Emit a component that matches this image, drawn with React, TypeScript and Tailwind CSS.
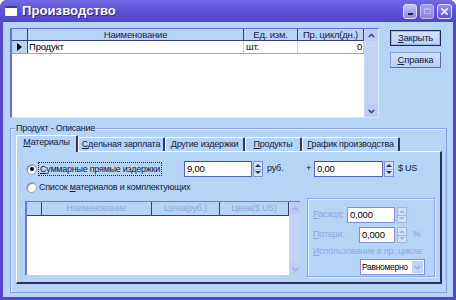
import { ChevronUp, ChevronDown, X } from "lucide-react";
import clsx from "clsx";

const BODY = "bg-[#b5d4f6]";
const font = "font-['Liberation_Sans',Arial,sans-serif]";
const TXT = "text-[9px] tracking-[-0.25px] text-[#141a40] whitespace-nowrap";

function U({ k, rest }: { k: string; rest: string }) {
  return (
    <span className="whitespace-nowrap">
      <span className="underline underline-offset-[1px]">{k}</span>
      {rest}
    </span>
  );
}

function Spin({ disabled }: { disabled?: boolean }) {
  const c = disabled ? "border-[#9fb2ea] text-[#9fb2ea]" : "border-[#7d8fd4] text-[#26306a]";
  return (
    <div className={clsx("w-[10px] h-[16px] flex flex-col border bg-[#d6e2fa]", c)}>
      <div className="flex-1 flex items-center justify-center border-b border-[#9fb2ea]">
        <span className="w-0 h-0 border-l-[3px] border-r-[3px] border-b-[3px] border-l-transparent border-r-transparent border-b-current" />
      </div>
      <div className="flex-1 flex items-center justify-center">
        <span className="w-0 h-0 border-l-[3px] border-r-[3px] border-t-[3px] border-l-transparent border-r-transparent border-t-current" />
      </div>
    </div>
  );
}

function Input({ value, w, disabled }: { value: string; w: string; disabled?: boolean }) {
  return (
    <div
      className={clsx(
        "h-[16px] bg-white border flex items-center pl-[2px] text-[9.5px] tracking-[-0.2px] shrink-0 text-black",
        disabled ? "border-[#7f8fd8]" : "border-[#5b5fc0] border-t-[#4048a8]",
        w
      )}
    >
      {value}
    </div>
  );
}

function TitleBar() {
  return (
    <div className="h-[22px] flex items-center bg-gradient-to-b from-[#7168e6] via-[#5b52d6] to-[#5047c8] pl-[5px] pr-[4px]">
      <div className="w-[12px] h-[10px] bg-white border-t-[2px] border-[#2a3fb0] rounded-[1px]" />
      <span className="ml-[5px] text-white font-bold text-[13px] tracking-[0.1px] [text-shadow:1px_1px_0_#2c2490]">Производство</span>
      <div className="ml-auto flex gap-[3px] items-center">
        <div className="w-[14px] h-[15px] rounded-[3px] border border-[#e6e2ff] bg-gradient-to-b from-[#c9c3f6] to-[#8f86e6] flex items-end justify-center pb-[3px]">
          <div className="w-[5px] h-[2px] bg-[#1c1c4c]" />
        </div>
        <div className="w-[14px] h-[15px] rounded-[3px] border border-[#c9c3f4] bg-gradient-to-b from-[#a59df0] to-[#8a82e4] flex items-center justify-center">
          <div className="w-[7px] h-[6px] border border-[#b9b2f2] border-t-2" />
        </div>
        <div className="w-[15px] h-[15px] rounded-[3px] border border-[#e6e2ff] bg-gradient-to-b from-[#9b8ff0] to-[#5e4fd0] flex items-center justify-center">
          <X size={11} strokeWidth={3.5} className="text-white" />
        </div>
      </div>
    </div>
  );
}

function VScroll({ disabled, w }: { disabled?: boolean; w: string }) {
  const col = disabled ? "text-[#9fb2ea]" : "text-[#3a4aa8]";
  return (
    <div className={clsx("flex flex-col justify-between bg-[#c2d3f7] border-l border-[#c9d7f7]", w)}>
      <div className="h-[12px] flex items-center justify-center bg-[#bccdf5]">
        <ChevronUp size={9} strokeWidth={4} className={col} />
      </div>
      <div className="h-[12px] flex items-center justify-center bg-[#bccdf5]">
        <ChevronDown size={9} strokeWidth={4} className={col} />
      </div>
    </div>
  );
}

function MainGrid() {
  return (
    <div className="w-[369px] h-[90px] flex border border-[#6a6ec4] border-l-2 border-r-[#dbe6fb] border-b-[#dbe6fb] bg-white">
      <div className="flex-1 flex flex-col">
        <div className={clsx("h-[12px] flex border-b border-[#3a3c74]", BODY, "text-[#1c2050] text-[9.5px] leading-[11px] tracking-[-0.2px]")}>
          <div className="w-[16px] border-r border-[#3a3c74]" />
          <div className="w-[216px] border-r border-[#3a3c74] text-center">Наименование</div>
          <div className="w-[54px] border-r border-[#3a3c74] text-center">Ед. изм.</div>
          <div className="flex-1 border-r border-[#3a3c74] text-center whitespace-nowrap">Пр. цикл(дн.)</div>
        </div>
        <div className="h-[13px] flex border-b border-[#a8a8a8] text-[9.5px] leading-[12px] tracking-[-0.2px]">
          <div className={clsx("w-[16px] border-r border-[#3a3c74] flex items-center justify-center", BODY)}>
            <span className="w-0 h-0 border-t-[4px] border-b-[4px] border-l-[5px] border-t-transparent border-b-transparent border-l-black" />
          </div>
          <div className="w-[216px] border-r border-[#d0d0d0] pl-[1px]">Продукт</div>
          <div className="w-[54px] border-r border-[#d0d0d0] pl-[2px]">шт.</div>
          <div className="flex-1 text-right pr-[1px] border-r border-[#d0d0d0]">0</div>
        </div>
      </div>
      <VScroll w="w-[14px]" />
    </div>
  );
}

function Btn({ k, rest, def }: { k: string; rest: string; def?: boolean }) {
  return (
    <div
      className={clsx(
        "w-[51px] h-[16px] flex items-center justify-center text-[9.5px] tracking-[-0.2px] text-[#15204c] bg-gradient-to-b from-[#d2e2fa] to-[#b9cff5]",
        def ? "border border-[#1e2850] shadow-[inset_0_0_0_1px_#9db6ea]" : "border border-[#8aa2dc] border-r-[#5a6aa8] border-b-[#5a6aa8]"
      )}
    >
      <U k={k} rest={rest} />
    </div>
  );
}

function Tab({ k, rest, w, active }: { k: string; rest: string; w: string; active?: boolean }) {
  return (
    <div
      className={clsx(
        "flex items-center justify-center text-[9px] tracking-[-0.2px] text-[#141a40] border-l border-t border-l-white border-t-white border-r-2 border-r-[#30346a] rounded-t-[2px] shrink-0",
        w,
        active ? clsx("h-[17px] -mb-[1px] z-10 pb-[2px]", BODY) : "h-[14px]"
      )}
    >
      <U k={k} rest={rest} />
    </div>
  );
}

function Radio({ on }: { on?: boolean }) {
  return (
    <div className="w-[11px] h-[11px] shrink-0 rounded-full bg-white border border-[#8da0d8] flex items-center justify-center shadow-[inset_1px_1px_0_#7a86c0]">
      {on && <div className="w-[4px] h-[4px] rounded-full bg-black" />}
    </div>
  );
}

function SubGrid() {
  const hd = "border-r border-[#3a3c74] text-center text-[#90a8e6] whitespace-nowrap";
  return (
    <div className="mt-[3px] w-[275px] h-[74px] flex border-l-2 border-t border-[#6c78d4] bg-white shrink-0">
      <div className="flex-1 flex flex-col">
        <div className={clsx("h-[14px] flex border-b border-[#3a3c74] text-[9px] leading-[13px] tracking-[-0.2px]", BODY)}>
          <div className="w-[15px] border-r border-[#3a3c74]" />
          <div className={clsx("w-[110px]", hd)}>Наименование</div>
          <div className={clsx("w-[68px]", hd)}>Цена(руб.)</div>
          <div className={clsx("flex-1", hd)}>Цена($ US)</div>
        </div>
      </div>
      <VScroll w="w-[11px]" disabled />
    </div>
  );
}

function SidePanel() {
  const lbl = "text-[#8fa6e4] text-[9px] tracking-[-0.2px] whitespace-nowrap";
  return (
    <div className="ml-[7px] w-[128px] h-[79px] border border-[#8fa2e2] shadow-[inset_1px_1px_0_#e4edfc,1px_1px_0_#e4edfc] pl-[5px] pt-[8px] flex flex-col shrink-0">
      <div className="flex items-center">
        <span className={clsx(lbl, "w-[34px]")}>
          <U k="Р" rest="асход:" />
        </span>
        <Input value="0,000" w="w-[48px]" disabled />
        <div className="ml-[2px]">
          <Spin disabled />
        </div>
      </div>
      <div className="flex items-center mt-[4px]">
        <span className={clsx(lbl, "w-[46px]")}>
          <U k="П" rest="отери:" />
        </span>
        <Input value="0,000" w="w-[36px]" disabled />
        <div className="ml-[2px]">
          <Spin disabled />
        </div>
        <span className={clsx(lbl, "ml-[6px]")}>%</span>
      </div>
      <div className={clsx(lbl, "leading-[12px] mt-[2px]")}>
        <U k="И" rest="спользование в пр. цикле:" />
      </div>
      <div className="ml-[47px] mt-[2px] w-[65px] h-[16px] bg-white border border-[#7f8fd8] flex items-center">
        <span className="flex-1 pl-[1px] text-[8.5px] tracking-[-0.3px] whitespace-nowrap">Равномерно</span>
        <div className="w-[11px] h-[12px] mr-[1px] bg-[#c2d3f7] flex items-center justify-center shrink-0">
          <ChevronDown size={9} strokeWidth={4} className="text-[#9fb2ea]" />
        </div>
      </div>
    </div>
  );
}

function GroupBox() {
  return (
    <div className="relative mt-[10px] w-[437px] h-[165px] border border-[#8e9fe0] shadow-[inset_1px_1px_0_#e4edfc] px-[5px] pt-[6px]">
      <div className={clsx("absolute -top-[7px] left-[4px] px-[1px]", TXT, BODY)}>Продукт - Описание</div>
      <div className="flex items-end h-[16px]">
        <Tab k="М" rest="атериалы" w="w-[62px]" active />
        <Tab k="С" rest="дельная зарплата" w="w-[87px]" />
        <Tab k="Д" rest="ругие издержки" w="w-[80px]" />
        <Tab k="П" rest="родукты" w="w-[57px]" />
        <Tab k="Г" rest="рафик производства" w="w-[98px]" />
      </div>
      <div className="w-[426px] h-[133px] border-l border-t border-l-white border-t-white border-r-2 border-b-2 border-r-[#2c3060] border-b-[#2c3060] pl-[9px] pt-[9px] flex flex-col">
        <div className="flex items-center h-[16px]">
          <div className="w-[158px] flex items-center shrink-0">
            <Radio on />
            <span className={clsx("ml-[1px] px-[1px] border border-dotted border-[#202040] leading-[12px]", TXT)}>
              <U k="С" rest="уммарные прямые издержки" />
            </span>
          </div>
          <Input value="9,00" w="w-[68px]" />
          <div className="ml-[1px]">
            <Spin />
          </div>
          <span className={clsx("ml-[4px] w-[18px]", TXT)}>руб.</span>
          <span className={clsx("ml-[21px]", TXT)}>+</span>
          <div className="ml-[3px]">
            <Input value="0,00" w="w-[69px]" />
          </div>
          <div className="ml-[1px]">
            <Spin />
          </div>
          <span className={clsx("ml-[4px]", TXT)}>$ US</span>
        </div>
        <div className="flex items-center mt-[4px] h-[13px]">
          <Radio />
          <span className={clsx("ml-[2px]", TXT)}>
            Список <U k="м" rest="атериалов и комплектующих" />
          </span>
        </div>
        <div className="flex items-start mt-[4px] -ml-[1px]">
          <SubGrid />
          <SidePanel />
        </div>
      </div>
    </div>
  );
}

export default function App() {
  return (
    <div className={clsx("w-[456px] h-[300px] bg-[#5646c8] flex flex-col rounded-t-[7px] overflow-hidden", font)}>
      <TitleBar />
      <div className={clsx("flex-1 mx-[3px] mb-[3px] flex flex-col px-[7px] pt-[6px]", BODY)}>
        <div className="flex">
          <MainGrid />
          <div className="ml-[11px] pt-[2px] flex flex-col gap-[6px]">
            <Btn k="З" rest="акрыть" def />
            <Btn k="С" rest="правка" />
          </div>
        </div>
        <GroupBox />
      </div>
    </div>
  );
}
